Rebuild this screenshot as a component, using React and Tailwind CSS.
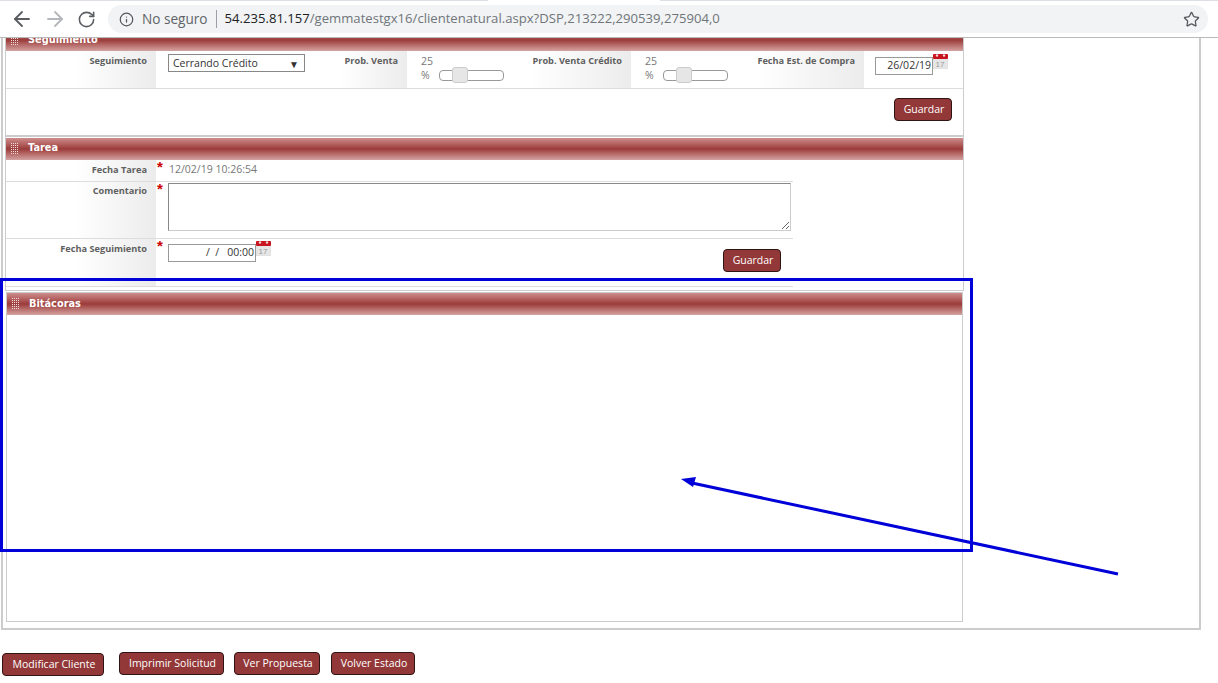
import React from 'react';
import { ArrowLeft, ArrowRight, RotateCw, Info, Star } from 'lucide-react';

const GRIP_DOTS = [];
for (let row = 0; row < 6; row++) {
    for (let col = 0; col < 4; col++) {
        GRIP_DOTS.push([col * 2, row * 2]);
    }
}

function Grip() {
    return (
        <svg width="8" height="12" viewBox="0 0 8 12" className="shrink-0">
            {GRIP_DOTS.map(([x, y]) => (
                <rect key={`${x}-${y}`} x={x} y={y} width="1" height="1" fill="#f3dcdc" />
            ))}
        </svg>
    );
}

function SectionHeader({ title, textClassName = 'mb-[2px]' }) {
    return (
        <div className="flex h-[22px] items-center gap-[9px] pl-[5px] bg-linear-to-b from-[#cd8d8d] via-[#9b3b3b] to-[#d3a3a3]">
            <Grip />
            <span className={`font-['DejaVu_Sans'] text-[9.8px] font-bold text-white ${textClassName}`}>{title}</span>
        </div>
    );
}

function CalendarIcon() {
    return (
        <svg width="15" height="16" viewBox="0 0 15 16" className="-mt-[1px] shrink-0">
            <rect x="0.5" y="5" width="14" height="11" fill="#e6e6e6" stroke="#d2d2d2" strokeWidth="0.5" />
            <rect x="0" y="1" width="15" height="5" rx="1" fill="#c8141e" />
            <circle cx="4" cy="2.5" r="1.2" fill="#f2d6d6" />
            <circle cx="11" cy="2.5" r="1.2" fill="#f2d6d6" />
            <text x="7" y="13.5" fontSize="8" textAnchor="middle" fill="#9a9a9a" fontFamily="Liberation Sans">17</text>
        </svg>
    );
}

function Label({ text, className }) {
    return (
        <div className={`shrink-0 self-stretch pr-[9px] text-right font-['Open_Sans'] text-[9.2px] font-bold leading-[14px] text-[#5f5f5f] bg-linear-to-r from-white to-[#ececec] ${className}`}>
            {text}
        </div>
    );
}

function Required() {
    return <span className="absolute left-[1px] top-[-1px] font-['Liberation_Sans'] text-[15px] font-bold leading-[15px] text-[#cc0000]">*</span>;
}

function Slider() {
    return (
        <div className="flex items-end gap-[6px] pl-[14px] pt-[3px] font-['Open_Sans'] text-[10.5px] leading-[14px] text-[#777777]">
            <div className="w-[12px]">25 %</div>
            <div className="relative mb-[1px] h-[11px] w-[65px] rounded-[4px] border border-[#999999] bg-white">
                <div className="absolute left-[12px] top-[-4px] h-[16px] w-[16px] rounded-[3px] border border-[#cccccc] bg-[#e6e6e6]" />
            </div>
        </div>
    );
}

function MaroonButton({ text, className }) {
    return (
        <button className={`h-[23px] rounded-[4px] border border-[#2f1414] bg-[#933838] pl-[2px] font-['Open_Sans'] text-[10.5px] text-white ${className}`}>
            {text}
        </button>
    );
}

function BrowserBar() {
    return (
        <div className="h-[38px] border-b border-[#b9b9b9] bg-white">
            <div className="flex h-[1px]">
                <div className="w-[488px] bg-[#dcdfe3]" />
                <div className="w-[172px]" />
                <div className="flex-1 bg-[#dcdfe3]" />
            </div>
            <div className="flex h-[36px] items-center pl-[10px]">
                <ArrowLeft size={24} strokeWidth={1.8} className="text-[#5a5d61]" />
                <ArrowRight size={24} strokeWidth={1.8} className="ml-[9px] text-[#b4b7bb]" />
                <RotateCw size={19} strokeWidth={2} className="ml-[10px] text-[#5a5d61]" />
                <div className="ml-[12px] flex h-[28px] w-[1100px] items-center rounded-full bg-[#f1f3f4] pl-[11px] pr-[8px] font-['Open_Sans'] text-[13.12px]">
                    <Info size={15} strokeWidth={2} className="text-[#55585c]" />
                    <span className="ml-[8px] text-[13.6px] text-[#5f6368]">No seguro</span>
                    <div className="ml-[8px] h-[18px] w-[1px] bg-[#9aa0a6]" />
                    <span className="ml-[8px] text-[#202124]">54.235.81.157</span>
                    <span className="text-[#70757a]">/gemmatestgx16/clientenatural.aspx?DSP,213222,290539,275904,0</span>
                    <Star size={17} strokeWidth={1.8} className="ml-auto text-[#55585c]" />
                </div>
            </div>
        </div>
    );
}

function Seguimiento() {
    return (
        <section className="-mt-[9px] border-x border-b-2 border-[#cccccc]">
            <SectionHeader title="Seguimiento" textClassName="mb-[0px]" />
            <div className="flex h-[38px] border-b border-[#dddddd]">
                <Label text="Seguimiento" className="w-[150px] pt-[3px] from-[46%]" />
                <div className="w-[177px] pl-[12px] pt-[3px]">
                    <div className="flex h-[18px] w-[137px] items-center justify-between border border-[#888888] pl-[4px] pr-[5px] pt-[1px] font-['Open_Sans'] text-[10.5px] text-[#333333]">
                        <span>Cerrando Crédito</span>
                        <span className="text-[10px] leading-none">▼</span>
                    </div>
                </div>
                <Label text="Prob. Venta" className="w-[74px] pt-[3px] from-[10%]" />
                <div className="w-[113px]"><Slider /></div>
                <Label text="Prob. Venta Crédito" className="w-[111px] pt-[3px] from-[10%]" />
                <div className="w-[114px]"><Slider /></div>
                <Label text="Fecha Est. de Compra" className="w-[119px] pt-[3px] from-[10%]" />
                <div className="flex items-start pl-[11px] pt-[3px]">
                    <div className="mt-[3px] flex h-[18px] w-[58px] items-center justify-end border border-[#999999] pr-[1px] font-['Open_Sans'] text-[10.5px] text-[#333333]">26/02/19</div>
                    <CalendarIcon />
                </div>
            </div>
            <div className="flex h-[46px] justify-end pr-[11px] pt-[9px]">
                <MaroonButton text="Guardar" className="w-[58px]" />
            </div>
        </section>
    );
}

function Tarea() {
    return (
        <section className="border-x border-[#cccccc] pt-[1px]">
            <SectionHeader title="Tarea" />
            <div className="w-[787px]">
                <div className="flex h-[22px] border-b border-[#dddddd]">
                    <Label text="Fecha Tarea" className="w-[150px] pt-[3px] from-[46%]" />
                    <div className="relative flex-1 pl-[13px] pt-[1px] font-['Open_Sans'] text-[10.5px] leading-[16px] text-[#777777]">
                        <Required />
                        12/02/19 10:26:54
                    </div>
                </div>
                <div className="flex h-[57px] border-b border-[#dddddd]">
                    <Label text="Comentario" className="w-[150px] pt-[2px] from-[46%]" />
                    <div className="relative flex-1 pl-[12px] pt-[1px]">
                        <Required />
                        <textarea className="block h-[48px] w-[623px] border border-[#888888] border-b-[#cccccc] border-r-[#cccccc] bg-white outline-none" />
                    </div>
                </div>
                <div className="flex h-[48px] border-b border-[#dddddd]">
                    <Label text="Fecha Seguimiento" className="w-[150px] pt-[3px] from-[46%]" />
                    <div className="relative flex flex-1 items-start pl-[12px] pt-[2px]">
                        <Required />
                        <div className="mt-[3px] flex h-[18px] w-[88px] items-center justify-end border border-[#999999] pr-[1px] font-['Open_Sans'] text-[10.5px] whitespace-pre text-[#333333]">{'/  /   00:00'}</div>
                        <CalendarIcon />
                        <MaroonButton text="Guardar" className="ml-[452px] mt-[8px] w-[58px]" />
                    </div>
                </div>
            </div>
            <div className="h-[4px] border-b border-[#cccccc]" />
        </section>
    );
}

function Bitacoras() {
    return (
        <section className="ml-[1px] mt-[1px] h-[330px] w-[957px] border border-[#cccccc]">
            <SectionHeader title="Bitácoras" textClassName="mb-[0px]" />
        </section>
    );
}

function Annotation() {
    return (
        <>
            <div className="pointer-events-none absolute left-0 top-[278px] h-[274px] w-[973px] border-[3px] border-[#0000d8]" />
            <svg width="1218" height="683" className="pointer-events-none absolute left-0 top-0">
                <line x1="1118" y1="574" x2="692" y2="483" stroke="#0000d8" strokeWidth="3" />
                <polygon points="681,479 696,477 693,487" fill="#0000d8" />
            </svg>
        </>
    );
}

export default function App() {
    return (
        <div className="relative h-[683px] w-[1218px] overflow-hidden bg-white">
            <BrowserBar />
            <main className="ml-[1px] h-[592px] w-[1200px] overflow-hidden border-x-2 border-b-2 border-[#cccccc]">
                <div className="ml-[2px] w-[959px]">
                    <Seguimiento />
                    <Tarea />
                    <Bitacoras />
                </div>
            </main>
            <div className="flex items-start pl-[2px] pt-[22px]">
                <MaroonButton text="Modificar Cliente" className="mt-[1px] w-[102px]" />
                <MaroonButton text="Imprimir Solicitud" className="ml-[15px] w-[105px]" />
                <MaroonButton text="Ver Propuesta" className="ml-[10px] w-[86px]" />
                <MaroonButton text="Volver Estado" className="ml-[11px] w-[84px]" />
            </div>
            <Annotation />
        </div>
    );
}
